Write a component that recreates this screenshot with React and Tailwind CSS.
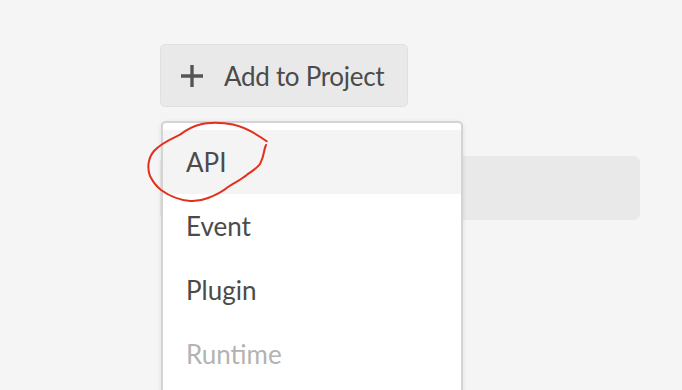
import React from 'react';

const items = [
  { label: 'API', active: true },
  { label: 'Event' },
  { label: 'Plugin' },
  { label: 'Runtime', disabled: true },
];

const PlusIcon = () => (
  <svg width="24" height="24" viewBox="0 0 24 24" className="shrink-0">
    <path d="M12 1v22M1 12h22" stroke="#555555" strokeWidth="3.4" strokeLinecap="butt" />
  </svg>
);

const App = () => {
  return (
    <div
      className="relative h-[390px] w-[682px] overflow-hidden bg-[#f5f5f5] pl-[160px] pt-[44px]"
      style={{ fontFamily: 'Lato, "Open Sans", sans-serif' }}
    >
      {/* trigger */}
      <button className="flex h-[63px] w-[248px] items-center gap-[20px] rounded-[5px] border border-[#e0e0e0] bg-[#e9e9e9] pl-[19px] text-[26px] tracking-[-0.3px] text-[#4b4b4b]">
        <PlusIcon />
        <span className="pt-[1px]">Add to Project</span>
      </button>

      {/* row behind the menu */}
      <div className="mt-[49px] h-[64px] w-[480px] rounded-[6px] bg-[#e9e9e9]" />

      {/* menu */}
      <div className="absolute left-[161px] top-[121px] h-[300px] w-[302px] rounded-[5px] border-2 border-[#d4d4d4] bg-white pt-[7px] shadow-[0_1px_4px_rgba(0,0,0,0.1)]">
        {items.map((item) => (
          <div
            key={item.label}
            className={`flex h-[64px] items-center pl-[23px] pt-[1px] text-[26px] ${
              item.active ? 'bg-[#f4f4f4]' : ''
            } ${item.disabled ? 'text-[#b3b3b3]' : 'text-[#4b4b4b]'}`}
          >
            {item.label}
          </div>
        ))}
      </div>

      {/* hand-drawn annotation */}
      <svg className="pointer-events-none absolute left-0 top-0" width="682" height="390">
        <path
          d="M266.7 141.3 C258 135 245 127 233 124.5 C222 122 208 122 200 124.5 C190 127 185 131 180 134.7 C171 139 161 143 154 151 C148 158 147 168 150 176 C153 182 156 186 161 190 C168 195 178 200 190 201 C198 201.5 203 200 208 198 C216 195 222 192 228 187 C236 182 242 179 247 174.7 C254 170 258 167 260 164 C262 160 263.5 155 264 152 C264.5 149 265 147 266 145"
          fill="none"
          stroke="#e2301b"
          strokeWidth="2"
          strokeLinecap="round"
        />
      </svg>
    </div>
  );
};

export default App;
